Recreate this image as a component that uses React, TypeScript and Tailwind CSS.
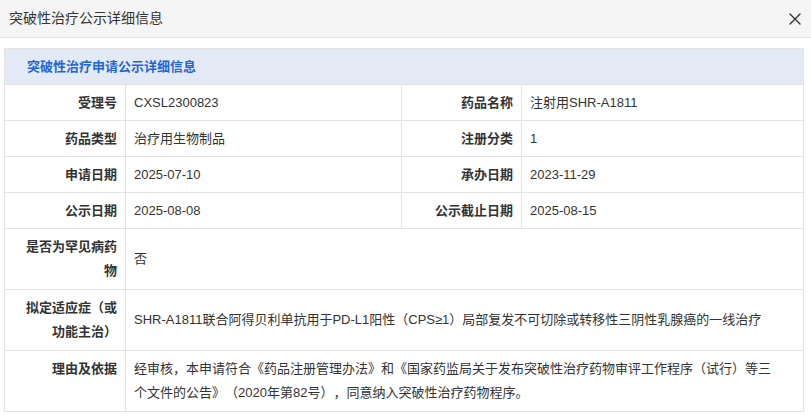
import React from 'react';

const font = { fontFamily: '"Liberation Sans", "Noto Sans CJK SC", sans-serif' };

type Pair = { label: string; value: string };

const pairRows: [Pair, Pair][] = [
  [{ label: '受理号', value: 'CXSL2300823' }, { label: '药品名称', value: '注射用SHR-A1811' }],
  [{ label: '药品类型', value: '治疗用生物制品' }, { label: '注册分类', value: '1' }],
  [{ label: '申请日期', value: '2025-07-10' }, { label: '承办日期', value: '2023-11-29' }],
  [{ label: '公示日期', value: '2025-08-08' }, { label: '公示截止日期', value: '2025-08-15' }],
];

const wideRows: Pair[] = [
  { label: '是否为罕见病药物', value: '否' },
  {
    label: '拟定适应症（或功能主治）',
    value: 'SHR-A1811联合阿得贝利单抗用于PD-L1阳性（CPS≥1）局部复发不可切除或转移性三阴性乳腺癌的一线治疗',
  },
  {
    label: '理由及依据',
    value:
      '经审核，本申请符合《药品注册管理办法》和《国家药监局关于发布突破性治疗药物审评工作程序（试行）等三个文件的公告》（2020年第82号），同意纳入突破性治疗药物程序。',
  },
];

const Label = ({ children }: { children: React.ReactNode }) => (
  <div className="flex items-center justify-end text-right pl-3 pr-2 font-bold text-[#333]">{children}</div>
);

const Value = ({ children, wide }: { children: React.ReactNode; wide?: boolean }) => (
  <div className={`flex items-center border-l border-[#e3e3e3] pl-2 text-[#333] ${wide ? 'pr-6' : 'pr-2'}`}>
    {children}
  </div>
);

export default function App() {
  return (
    <div className="w-[811px] h-[419px] bg-white overflow-hidden [text-spacing-trim:space-all]" style={font}>
      <div className="h-[38px] bg-[#f5f5f5] border-b border-[#e6e6e6] flex items-center justify-between pl-[9px] pr-[10px]">
        <span className="text-[14px] text-[#333]">突破性治疗公示详细信息</span>
        <svg width="12" height="12" viewBox="0 0 12 12">
          <path d="M1 1 L11 11 M11 1 L1 11" stroke="#333" strokeWidth="1.4" strokeLinecap="round" />
        </svg>
      </div>

      <div className="ml-1 mt-[10px] w-[800px] border border-[#e3e3e3] text-[13px]">
        <div className="h-[35px] bg-[#e3eaf6] flex items-center pl-[22px] font-bold text-[#1f66d6]">
          突破性治疗申请公示详细信息
        </div>
        {pairRows.map(([a, b], i) => (
          <div key={i} className="grid grid-cols-[120px_276px_120px_1fr] h-[36px] border-t border-[#e3e3e3]">
            <Label>{a.label}</Label>
            <Value>{a.value}</Value>
            <div className="border-l border-[#e3e3e3] flex justify-end">
              <Label>{b.label}</Label>
            </div>
            <Value>{b.value}</Value>
          </div>
        ))}
        {wideRows.map((r, i) => (
          <div key={i} className="grid grid-cols-[120px_1fr] border-t border-[#e3e3e3] leading-[24px]">
            <div className="py-[6px]">
              <Label>{r.label}</Label>
            </div>
            <Value wide>
              <div className="py-[6px]">{r.value}</div>
            </Value>
          </div>
        ))}
      </div>
    </div>
  );
}
